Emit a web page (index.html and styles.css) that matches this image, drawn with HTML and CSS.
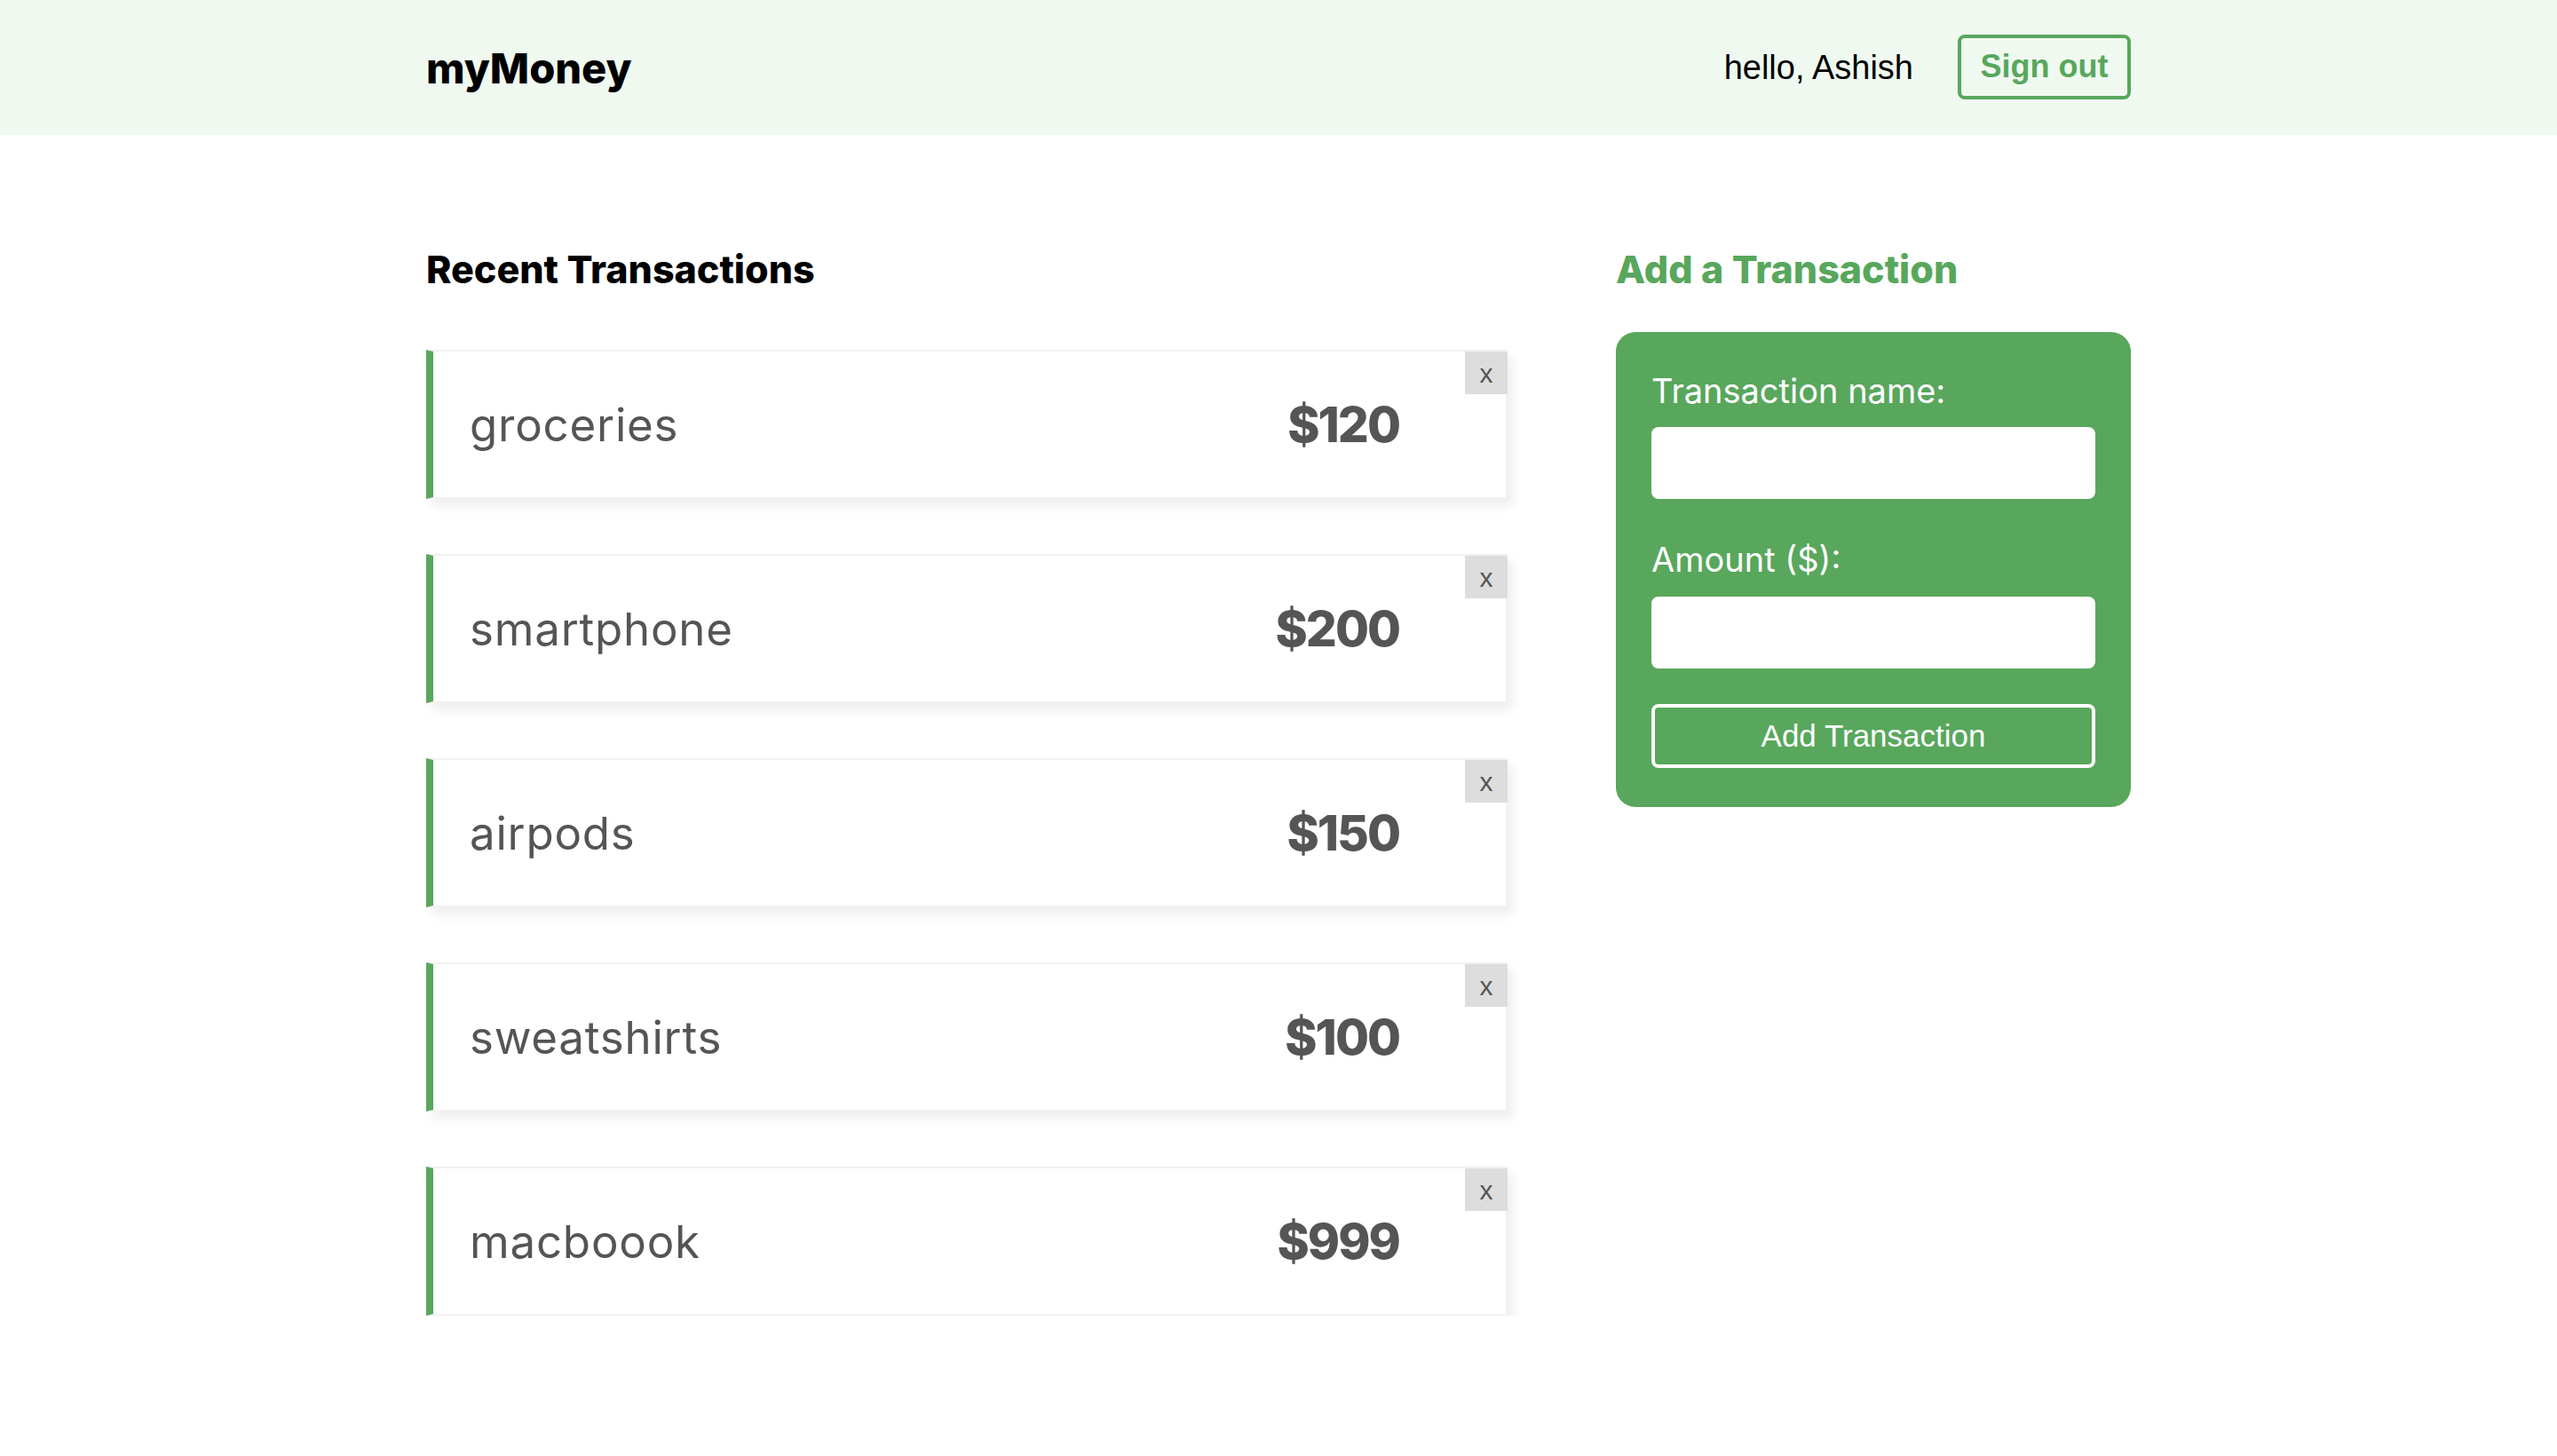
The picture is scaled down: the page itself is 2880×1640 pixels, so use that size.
FILE: index.html
```html
<!DOCTYPE html>
<html lang="en">
<head>
<meta charset="utf-8">
<title>myMoney</title>
<link rel="stylesheet" href="styles.css">
</head>
<body>
<nav class="navbar">
  <div class="nav-inner">
    <h1 class="logo">myMoney</h1>
    <div class="nav-right">
      <span class="hello">hello, Ashish</span>
      <button class="signout">Sign out</button>
    </div>
  </div>
</nav>
<main class="main">
  <section class="list-col">
    <h2 class="col-title">Recent Transactions</h2>
    <ul class="tx-list">
      <li class="tx"><span class="tx-name">groceries</span><span class="tx-amount">$120</span><button class="tx-del">x</button></li>
      <li class="tx"><span class="tx-name">smartphone</span><span class="tx-amount">$200</span><button class="tx-del">x</button></li>
      <li class="tx"><span class="tx-name">airpods</span><span class="tx-amount">$150</span><button class="tx-del">x</button></li>
      <li class="tx"><span class="tx-name">sweatshirts</span><span class="tx-amount">$100</span><button class="tx-del">x</button></li>
      <li class="tx"><span class="tx-name">macboook</span><span class="tx-amount">$999</span><button class="tx-del">x</button></li>
    </ul>
  </section>
  <aside class="form-col">
    <h2 class="col-title green">Add a Transaction</h2>
    <form class="tx-form">
      <label class="field">
        <span class="field-label">Transaction name:</span>
        <input class="field-input" type="text">
      </label>
      <label class="field">
        <span class="field-label">Amount ($):</span>
        <input class="field-input" type="number">
      </label>
      <button class="add-btn" type="button">Add Transaction</button>
    </form>
  </aside>
</main>
</body>
</html>
```
FILE: styles.css
```css
* { box-sizing: border-box; }
html, body { margin: 0; padding: 0; background: #fff; }
body { font-family: Inter, "Noto Sans", sans-serif; color: #000; }

.navbar { background: #eff9f0; height: 152px; }
.nav-inner {
  width: 1920px; margin: 0 auto; height: 100%;
  display: flex; align-items: center; justify-content: space-between;
}
.logo { margin: 0; font-size: 47px; font-weight: 800; letter-spacing: 0; }
.nav-right { display: flex; align-items: center; gap: 50px; }
.hello { font-family: "Liberation Sans", Arial, sans-serif; font-size: 38px; }
.signout {
  font-family: "Liberation Sans", Arial, sans-serif; font-weight: 700; font-size: 36px;
  color: #58a75c; background: transparent; border: 4px solid #58a75c; border-radius: 8px;
  height: 73px; width: 195px; padding: 0; margin-top: -2px; cursor: pointer;
}

.main {
  width: 1920px; margin: 0 auto; padding-top: 120px;
  display: grid; grid-template-columns: 1218px 580px; justify-content: space-between;
}
.col-title { margin: 0; font-size: 43px; font-weight: 800; line-height: 62px; letter-spacing: 0; }
.col-title.green { color: #58a75c; }

.tx-list { list-style: none; margin: 60px 0 0; padding: 0; display: flex; flex-direction: column; gap: 62px; }
.tx {
  position: relative; height: 168px;
  display: flex; align-items: center; justify-content: space-between;
  background: #fff; border: 2px solid #f1f1f1; border-left: 8px solid #58a75c;
  box-shadow: 6px 8px 12px rgba(0,0,0,0.07);
  padding: 0 120px 0 41px; color: #555;
}
.tx-name { font-size: 51px; font-weight: 400; letter-spacing: 0.8px; }
.tx-amount { font-size: 55px; font-weight: 800; letter-spacing: -2px; }
.tx-del {
  position: absolute; top: 0; right: -2px; width: 48px; height: 48px;
  border: none; background: #ddd; color: #555; padding: 2px 0 0;
  font-family: "Liberation Sans", Arial, sans-serif; font-size: 30px; cursor: pointer;
}

.tx-form {
  margin-top: 40px; background: #58a75c; border-radius: 22px;
  padding: 38px 40px 44px; display: flex; flex-direction: column;
}
.field { display: flex; flex-direction: column; margin-bottom: 40px; }
.field-label { color: #fff; font-size: 38px; line-height: 56px; margin-bottom: 13px; }
.field + .field .field-label { margin-bottom: 14px; }
.field-input { height: 81px; border: none; border-radius: 8px; background: #fff; font-size: 32px; padding: 0 16px; }
.add-btn {
  height: 72px; border: 4px solid #fff; border-radius: 8px; background: transparent; color: #fff;
  font-family: "Liberation Sans", Arial, sans-serif; font-size: 35px; cursor: pointer; padding: 0;
}
```
